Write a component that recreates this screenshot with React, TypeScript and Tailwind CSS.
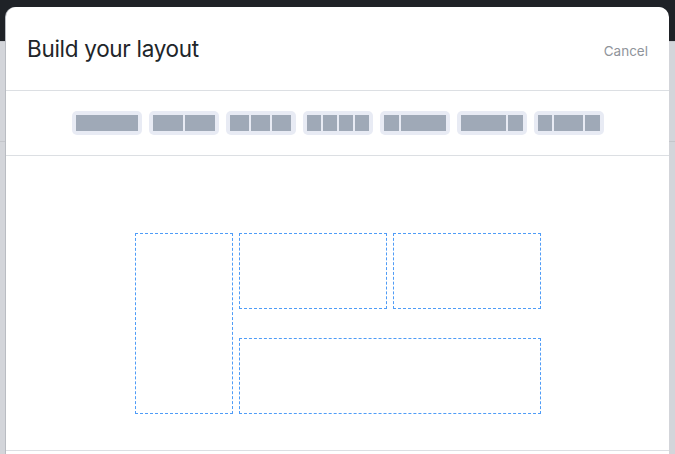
import React from 'react';

// each preset is a list of flex-grow weights for the cells
const presets: number[][] = [
  [4],
  [2, 2],
  [1, 1, 1],
  [1, 1, 1, 1],
  [1, 3],
  [3, 1],
  [1, 2, 1],
];

const growClass: Record<number, string> = {
  1: 'grow-[1]',
  2: 'grow-[2]',
  3: 'grow-[3]',
  4: 'grow-[4]',
};

function PresetButton({ cells }: { cells: number[] }) {
  return (
    <button className="flex h-[24px] w-[70px] gap-[2px] rounded-[5px] bg-[#e8ebf4] p-[4px]">
      {cells.map((c, i) => (
        <span key={i} className={`${growClass[c]} basis-0 bg-[#9fa9b7]`} />
      ))}
    </button>
  );
}

export default function App() {
  return (
    <div
      className="relative h-[454px] w-[675px] overflow-hidden bg-[#d3d5da]"
      style={{ fontFamily: 'Inter, "Liberation Sans", sans-serif' }}
    >
      <div className="h-[41px] bg-[#1f2227]" />
      <div className="h-[100px] border-t border-[#c4c6cb]" />
      <div className="border-t border-[#c4c6cb]" />

      <div className="absolute left-[6px] top-[7px] h-[470px] w-[663px] rounded-t-[10px] bg-white shadow-[-1px_0_0_#b9bcc2]">
        <div className="flex h-[84px] items-center justify-between border-b border-[#dcdfe3] px-[21px]">
          <h2 className="text-[22.5px] font-normal tracking-[-0.3px] text-[#212529]">Build your layout</h2>
          <button className="pt-[5px] text-[13.5px] text-[#8f949b]">Cancel</button>
        </div>

        <div className="flex h-[65px] items-center justify-center gap-[7px] border-b border-[#dcdfe3]">
          {presets.map((p, i) => (
            <PresetButton key={i} cells={p} />
          ))}
        </div>

        <div className="flex justify-center border-b border-[#dcdfe3] pb-[36px] pt-[77px]">
          <div className="grid grid-cols-[98px_148px_148px] grid-rows-[76px_76px] gap-x-[6px] gap-y-[29px]">
            <div className="row-span-2 border border-dashed border-[#4f9cf7]" />
            <div className="border border-dashed border-[#4f9cf7]" />
            <div className="border border-dashed border-[#4f9cf7]" />
            <div className="col-span-2 border border-dashed border-[#4f9cf7]" />
          </div>
        </div>
      </div>
    </div>
  );
}
